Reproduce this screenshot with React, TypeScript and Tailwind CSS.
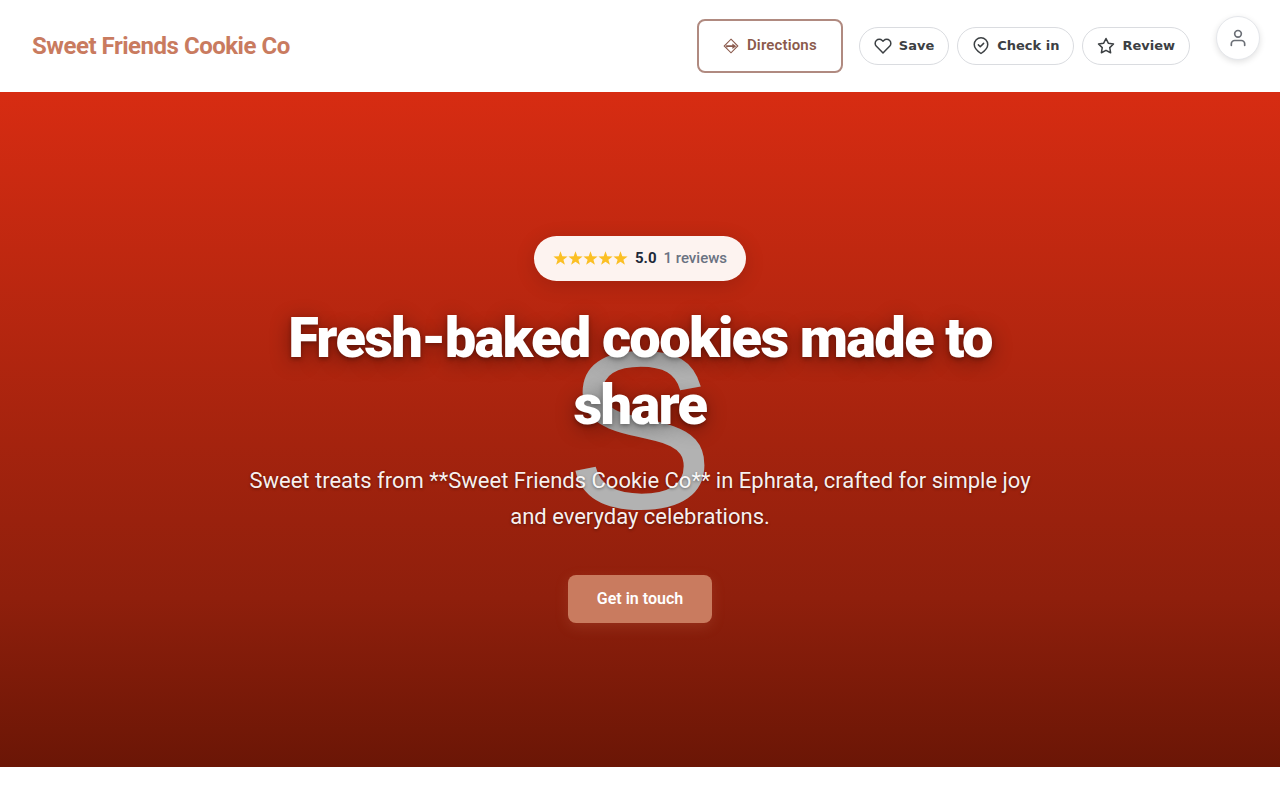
import type { ReactNode } from 'react';
import { FiHeart, FiStar, FiUser } from 'react-icons/fi';

const DirectionsIcon = () => (
  <svg viewBox="0 0 16 16" className="mt-0.5 size-4 shrink-0" fill="none" stroke="currentColor" aria-hidden="true">
    <path d="M8 1.2 14.8 8 8 14.8 1.2 8Z" strokeWidth="1.1" />
    <path d="M4 9.3V8.2h6" strokeWidth="1.8" />
    <path d="M9.4 5.4 13.2 8.2 9.4 11Z" fill="currentColor" stroke="none" />
  </svg>
);

const CheckInIcon = () => (
  <svg
    viewBox="0 0 24 24"
    className="size-[18px]"
    fill="none"
    stroke="currentColor"
    strokeWidth="2"
    strokeLinecap="round"
    strokeLinejoin="round"
    aria-hidden="true"
  >
    <path d="M12 22s-9-6-9-12a9 9 0 0 1 18 0c0 6-9 12-9 12Z" />
    <path d="m8.5 10.5 2.5 2.5 4.5-4.5" />
  </svg>
);

function PillButton({ icon, label }: { icon: ReactNode; label: string }) {
  return (
    <button
      type="button"
      className="flex h-[38px] items-center gap-[7px] rounded-full border border-[#dadce0] bg-white px-3.5 font-['DejaVu_Sans',sans-serif] text-[13px] font-bold text-[#3c4043] hover:bg-gray-50"
    >
      {icon}
      {label}
    </button>
  );
}

function Header() {
  return (
    <header className="relative flex items-center justify-between bg-white py-[19px] pr-[90px] pl-8">
      <a href="#" className="text-2xl font-bold tracking-[-0.02em] text-[#c97b5f]">
        Sweet Friends Cookie Co
      </a>
      <div className="flex items-center gap-4">
        <a
          href="#directions"
          className="flex h-[54px] items-center gap-2 rounded-lg border-2 border-[#b08a80] px-6 pb-0.5 text-[15px] font-semibold tracking-[0.01em] text-[#8b5a4c]"
        >
          <DirectionsIcon />
          Directions
        </a>
        <div className="flex gap-2">
          <PillButton icon={<FiHeart className="size-[18px]" />} label="Save" />
          <PillButton icon={<CheckInIcon />} label="Check in" />
          <PillButton icon={<FiStar className="size-[18px]" />} label="Review" />
        </div>
      </div>
      {/* floating account button */}
      <button
        type="button"
        aria-label="Account"
        className="absolute top-4 right-5 flex size-11 items-center justify-center rounded-full border border-gray-200 bg-white text-[#6b6f76] shadow-[0_2px_6px_rgba(0,0,0,0.12)]"
      >
        <FiUser className="size-5" />
      </button>
    </header>
  );
}

function Hero() {
  return (
    <section className="relative flex min-h-[675px] flex-col items-center justify-center bg-linear-to-b from-[#d72c12] via-[#8f1f0c] via-75% to-[#6b1606] px-6">
      {/* brand initial behind the copy */}
      <div
        aria-hidden="true"
        className="absolute inset-0 flex items-center justify-center font-['Liberation_Sans',sans-serif] text-[224px] leading-none text-[#b2b2b2]"
      >
        S
      </div>
      <div className="relative flex w-full max-w-[800px] flex-col items-center text-center">
        <div className="flex h-[45px] items-center gap-[7px] rounded-full bg-[#fdf3f0] px-[19px] text-[15px] shadow-[0_4px_20px_rgba(0,0,0,0.15)]">
          <span className="flex text-[#fbbf24]" aria-label="5 out of 5 stars">
            {[1, 2, 3, 4, 5].map((n) => (
              <svg key={n} viewBox="0 0 15 15" className="size-[15px]" fill="currentColor" aria-hidden="true">
                <path d="M7.5.3 9.3 5.2l5.3.2-4.2 3.3 1.5 5.1-4.4-3-4.4 3 1.5-5.1L.4 5.4l5.3-.2Z" />
              </svg>
            ))}
          </span>
          <span className="font-bold text-gray-800">5.0</span>
          <span className="font-medium text-gray-500">1 reviews</span>
        </div>
        <h1 className="mt-6 text-[56px] leading-[67px] font-black tracking-[-0.03em] text-white [text-shadow:0_2px_4px_rgba(0,0,0,0.3),0_4px_20px_rgba(0,0,0,0.4)]">
          Fresh-baked cookies made to share
        </h1>
        <p className="mt-6 text-[22px] leading-9 text-white/95 [text-shadow:0_1px_3px_rgba(0,0,0,0.4)]">
          Sweet treats from **Sweet Friends Cookie Co** in Ephrata, crafted for simple joy and everyday celebrations.
        </p>
        <a
          href="#contact"
          className="mt-10 flex h-12 items-center rounded-lg bg-[#c97b5f] px-[29px] text-base font-semibold text-white shadow-[0_4px_14px_rgba(201,123,95,0.2)]"
        >
          Get in touch
        </a>
      </div>
    </section>
  );
}

export default function App() {
  return (
    <div className="min-h-screen bg-white font-[Roboto,sans-serif]">
      <Header />
      <main>
        <Hero />
      </main>
    </div>
  );
}
